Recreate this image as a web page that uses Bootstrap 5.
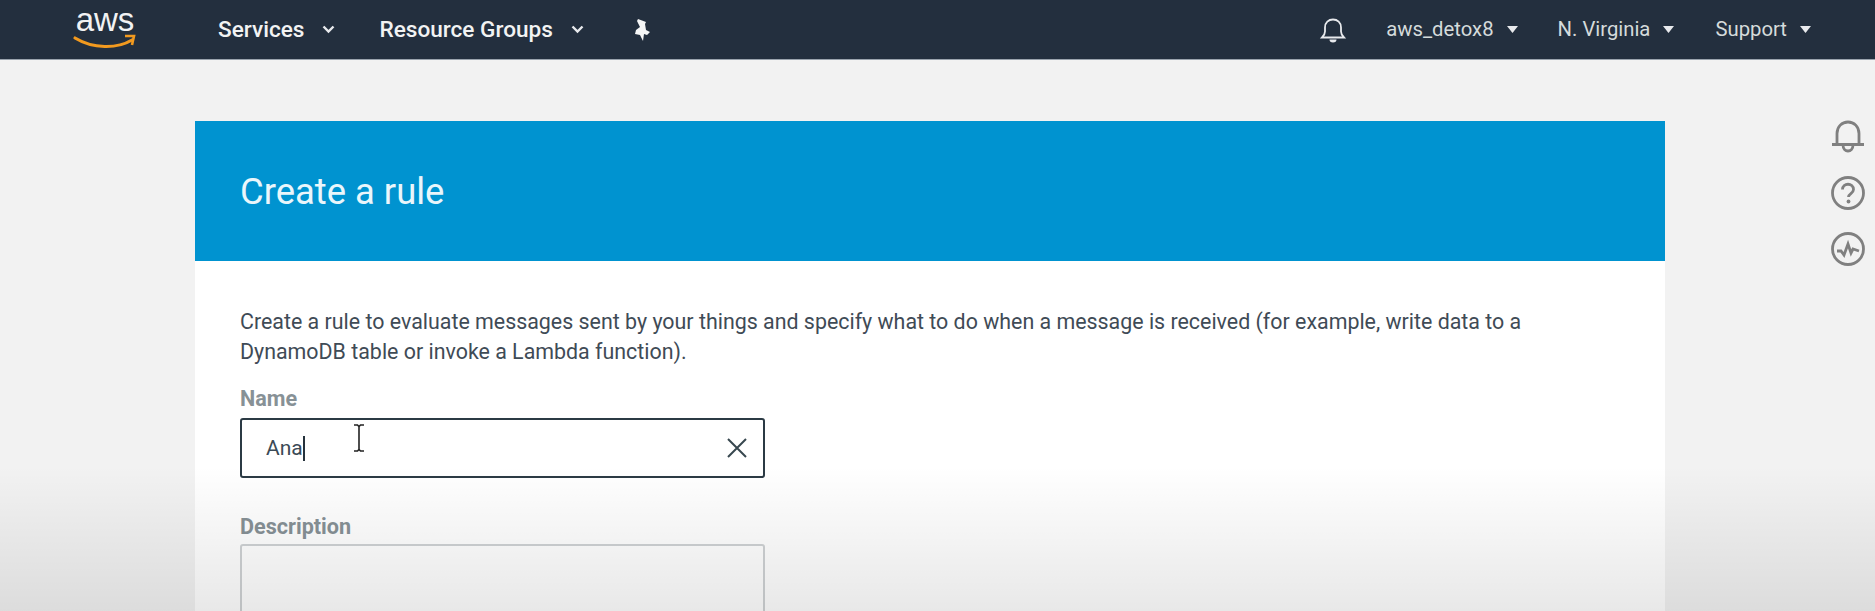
<!DOCTYPE html>
<html lang="en">
<head>
  <meta charset="UTF-8">
  <meta name="viewport" content="width=device-width, initial-scale=1">
  <title>Create a rule</title>
  <link href="https://cdn.jsdelivr.net/npm/bootstrap@5.3.0/dist/css/bootstrap.min.css" rel="stylesheet">
  <style>
      html, body {
          height: 611px;
          overflow: hidden;
      }
      body {
          position: relative;
          background: #f2f2f2;
          font-family: "Roboto", "Liberation Sans", sans-serif;
          color: #3b4650;
      }
      .top-bar {
          height: 60px;
          padding: 0;
          background: #232f3e;
          border-bottom: 1px solid #9aa3ad;
          color: #e8eaed;
          align-items: center;
          flex-wrap: nowrap;
      }
      .brand-box {
          width: 73px;
          margin-left: 72px;
          margin-right: 73px;
          display: flex;
      }
      .nav-main {
          font-size: 22.6px;
          font-weight: 500;
          color: #f2f3f3;
      }
      .nav-side {
          font-size: 20.3px;
          color: #d5dbdb;
      }
      .chev-gap { margin-left: 18px; }
      .caret-gap { margin-left: 13px; }
      .groups-gap { margin-left: 44px; }
      .bell-gap { margin-left: 39px; }
      .region-gap { margin-left: 40px; }
      .support-gap { margin-left: 41px; }
      .right-pad { width: 64px; }
      .rule-card {
          width: 1470px;
          margin: 61px 0 0 195px;
          border: 0;
          border-radius: 0;
          background: #fff;
          min-height: 500px;
      }
      .card-header.rule-head {
          height: 140px;
          background: #0093d0;
          color: #eaf6fb;
          padding-left: 45px;
          border-radius: 0;
          border: 0;
      }
      .rule-head h1 {
          font-size: 36.4px;
          font-weight: 400;
          margin: 2px 0 0;
      }
      .rule-body {
          padding: 46px 45px 0;
      }
      .intro-text {
          font-size: 21.4px;
          line-height: 30px;
          margin-bottom: 20px;
          color: #3f4b56;
      }
      .field-label {
          font-size: 21.6px;
          font-weight: 700;
          color: #879196;
          margin-bottom: 7px;
          line-height: 24px;
          display: block;
      }
      .desc-label { margin-bottom: 5px; }
      .field-box {
          position: relative;
          width: 525px;
      }
      .name-box { margin-bottom: 37px; }
      .name-input.form-control {
          height: 60px;
          border: 2px solid #2b3a44;
          border-radius: 3px;
          padding-left: 24px;
          font-size: 21px;
          color: #3b4a56;
          box-shadow: none;
      }
      .type-caret {
          position: absolute;
          left: 63px;
          top: 18px;
          width: 2px;
          height: 25px;
          background: #26323c;
      }
      .clear-x {
          position: absolute;
          right: 17px;
          top: 19px;
      }
      .text-cursor {
          position: absolute;
          left: 352px;
          top: 424px;
      }
      .desc-input.form-control {
          height: 120px;
          border: 2px solid #cfd2d4;
          border-radius: 3px;
          background: #fff;
      }
      .side-rail {
          position: absolute;
          right: 10px;
          top: 120px;
          width: 34px;
          gap: 22px;
      }
      .bottom-fade {
          position: absolute;
          left: 0;
          right: 0;
          bottom: 0;
          height: 145px;
          background: linear-gradient(rgba(0,0,0,0), rgba(0,0,0,.09));
          pointer-events: none;
      }
  </style>
</head>
<body>
  <nav class="navbar top-bar">
    <div class="d-flex align-items-center flex-grow-1">
      <div class="brand-box">
        <!-- aws smile logo, word stays real text -->
        <svg width="66" height="59" viewBox="0 0 66 59">
          <text x="33" y="31" text-anchor="middle" font-family="Liberation Sans, sans-serif" font-size="33" fill="#f1f2f3">aws</text>
          <path d="M3 38c18 11 42 11 57 2" fill="none" stroke="#f29a1f" stroke-width="3.2" stroke-linecap="round"/>
          <path d="M53 36l9 0l-2 9" fill="none" stroke="#f29a1f" stroke-width="2.6"/>
        </svg>
      </div>
      <span class="nav-main">Services</span>
      <svg class="chev-gap" width="13" height="9" viewBox="0 0 13 9"><path d="M1.5 1.5l5 5l5-5" fill="none" stroke="#e8eaed" stroke-width="2.4"/></svg>
      <span class="nav-main groups-gap">Resource Groups</span>
      <svg class="chev-gap" width="13" height="9" viewBox="0 0 13 9"><path d="M1.5 1.5l5 5l5-5" fill="none" stroke="#e8eaed" stroke-width="2.4"/></svg>
      <svg class="ms-5" width="20" height="24" viewBox="0 0 20 24"><path d="M6 1l8 3l-1 2l1 6l4 2l-3 3l-3-1l-1 7l-3-6l-5-1l1-4l4-3l-3-6z" fill="#f5f6f6"/></svg>
    </div>
    <div class="d-flex align-items-center">
      <svg width="28" height="28" viewBox="0 0 28 28"><path d="M3 21.5c2-2 3-3 3-6v-4c0-5 3.500-8 8-8s8 3 8 8v4c0 3 1 4 3 6z" fill="none" stroke="#e8eaed" stroke-width="1.800"/><path d="M10.500 23.500a3.500 3 0 0 0 7 0z" fill="#e8eaed"/></svg>
      <span class="nav-side bell-gap">aws_detox8</span>
      <svg class="caret-gap" width="11" height="7" viewBox="0 0 11 7"><path d="M0 0h11l-5.500 7z" fill="#e8eaed"/></svg>
      <span class="nav-side region-gap">N. Virginia</span>
      <svg class="caret-gap" width="11" height="7" viewBox="0 0 11 7"><path d="M0 0h11l-5.500 7z" fill="#e8eaed"/></svg>
      <span class="nav-side support-gap">Support</span>
      <svg class="caret-gap" width="11" height="7" viewBox="0 0 11 7"><path d="M0 0h11l-5.500 7z" fill="#e8eaed"/></svg>
      <div class="right-pad"></div>
    </div>
  </nav>

  <div class="card rule-card">
    <div class="card-header rule-head d-flex align-items-center">
      <h1>Create a rule</h1>
    </div>
    <div class="card-body rule-body">
      <p class="intro-text">Create a rule to evaluate messages sent by your things and specify what to do when a message is received (for example, write data to a DynamoDB table or invoke a Lambda function).</p>
      <label class="field-label">Name</label>
      <div class="field-box name-box">
        <input class="form-control name-input" type="text" value="Ana">
        <span class="type-caret"></span>
        <svg class="clear-x" width="22" height="22" viewBox="0 0 22 22"><path d="M2 2l18 18M20 2L2 20" stroke="#37474f" stroke-width="2"/></svg>
      </div>
      <label class="field-label desc-label">Description</label>
      <div class="field-box">
        <textarea class="form-control desc-input"></textarea>
      </div>
    </div>
  </div>

  <svg class="text-cursor" width="14" height="28" viewBox="0 0 14 28"><path d="M2 1h3.500l1.500 1.500l1.500-1.500h3.500M7 2.500v23M2 27h3.500l1.500-1.500l1.500 1.500h3.500" fill="none" stroke="#222" stroke-width="1.600"/></svg>

  <div class="side-rail d-flex flex-column align-items-center">
    <svg width="34" height="34" viewBox="0 0 34 34"><path d="M1 24.500h32M6 24.500v-11c0-7 5-11.500 11-11.500s11 4.500 11 11.500v11M12 25c0 8 10 8 10 0" fill="none" stroke="#808080" stroke-width="2.800"/></svg>
    <svg width="34" height="34" viewBox="0 0 34 34"><circle cx="17" cy="17" r="15.500" fill="none" stroke="#808080" stroke-width="2.800"/><path d="M11.500 13.500c0-7 11-7 11 0c0 4-5 4-5 7.500" fill="none" stroke="#808080" stroke-width="2.800"/><circle cx="17.500" cy="25.500" r="1.900" fill="#808080"/></svg>
    <svg width="34" height="34" viewBox="0 0 34 34"><circle cx="17" cy="17" r="15.500" fill="none" stroke="#808080" stroke-width="2.800"/><path d="M6 19l4 0l3 4l4-11l3 9l2-4l6 2" fill="none" stroke="#808080" stroke-width="2.800"/></svg>
  </div>

  <div class="bottom-fade"></div>

  <script src="https://cdn.jsdelivr.net/npm/bootstrap@5.3.0/dist/js/bootstrap.bundle.min.js"></script>
</body>
</html>
